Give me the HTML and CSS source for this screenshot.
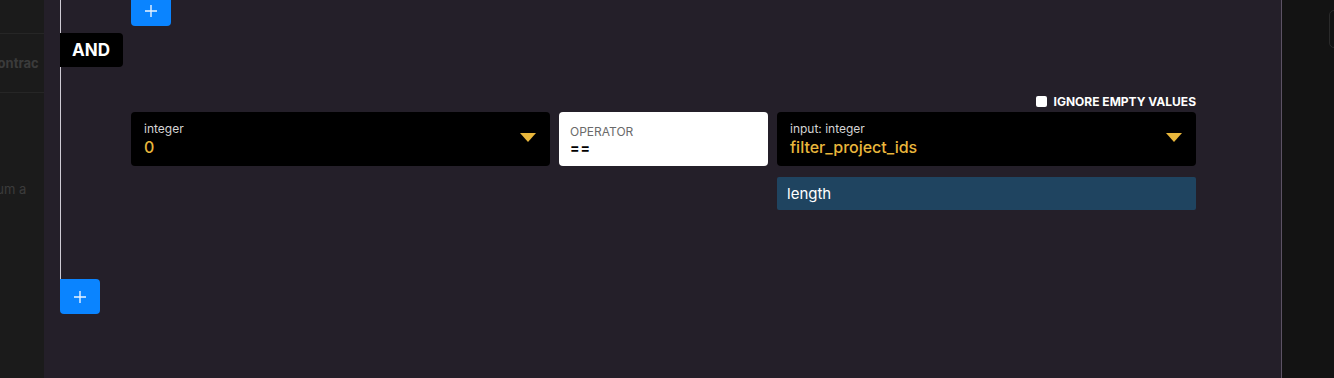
FILE: index.html
```html
<!DOCTYPE html>
<html lang="en">
<head>
    <meta charset="UTF-8">
    <meta name="viewport" content="width=device-width, initial-scale=1.0">
    <title>Filter conditions</title>
    <link rel="stylesheet" href="styles.css">
</head>
<body>
    <div class="backdrop backdrop-left">
        <div class="ghost-row ghost-head"></div>
        <div class="ghost-row ghost-title">Contrac</div>
        <div class="ghost-row ghost-text">Sum a</div>
    </div>

    <div class="panel">
        <div class="group">
            <button class="add add-top" type="button">
                <svg viewBox="0 0 14 14" width="14" height="14"><path d="M7 1v12M1 7h12" stroke="currentColor" stroke-width="1.4"/></svg>
            </button>
            <div class="and">AND</div>

            <div class="condition">
                <label class="option">
                    <span class="check"></span>
                    IGNORE EMPTY VALUES
                </label>
                <div class="fields">
                    <div class="field">
                        <div class="field-text">
                            <span class="field-label">integer</span>
                            <span class="field-value">0</span>
                        </div>
                        <span class="caret"></span>
                    </div>
                    <div class="field field-operator">
                        <div class="field-text">
                            <span class="field-label">OPERATOR</span>
                            <span class="field-value">==</span>
                        </div>
                    </div>
                    <div class="field">
                        <div class="field-text">
                            <span class="field-label">input: integer</span>
                            <span class="field-value">filter_project_ids</span>
                        </div>
                        <span class="caret"></span>
                    </div>
                </div>
                <div class="modifiers">
                    <div class="modifier">length</div>
                </div>
            </div>
        </div>
        <button class="add add-bottom" type="button">
            <svg viewBox="0 0 14 14" width="14" height="14"><path d="M7 1v12M1 7h12" stroke="currentColor" stroke-width="1.4"/></svg>
        </button>
    </div>

    <div class="backdrop backdrop-right">
        <div class="ghost-box"></div>
    </div>
</body>
</html>
```

FILE: styles.css
```css
*{
    box-sizing: border-box;
}
body{
    margin: 0;
    display: flex;
    height: 100vh;
    overflow: hidden;
    background: #121212;
    font-family: "Inter", "Liberation Sans", sans-serif;
}

/* page behind the modal */
.backdrop{
    overflow: hidden;
}
.backdrop-left{
    width: 44px;
    flex: none;
    background: #1b1b1b;
}
.ghost-row{
    margin-left: -12px;
    white-space: nowrap;
    color: #3b3b3b;
}
.ghost-head{
    height: 34px;
    border-bottom: 1px solid #262626;
}
.ghost-title{
    height: 59px;
    line-height: 58px;
    font-size: 13px;
    font-weight: 700;
    border-bottom: 1px solid #262626;
}
.ghost-text{
    margin-top: 88px;
    font-size: 13px;
}
.backdrop-right{
    flex: 1;
    background: #131313;
    padding-top: 10px;
}
.ghost-box{
    margin-left: 47px;
    width: 20px;
    height: 38px;
    border: 1px solid #2a2a2a;
    border-radius: 5px;
}

/* modal */
.panel{
    width: 1238px;
    flex: none;
    background: #241f29;
    border-right: 1px solid #5c5264;
    padding-left: 16px;
}
.group{
    border-left: 1px solid #cfcbd4;
    padding-left: 70px;
    padding-right: 85px;
    height: 279px;
}
.add{
    display: flex;
    align-items: center;
    justify-content: center;
    width: 40px;
    border: 0;
    padding: 0;
    background: #0a84ff;
    color: #eaf3ff;
    cursor: pointer;
}
.add-top{
    height: 26px;
    border-radius: 0 0 4px 4px;
}
.add-top svg{
    margin-top: -4px;
}
.add-bottom{
    height: 35px;
    border-radius: 0 4px 4px 4px;
}
.and{
    display: inline-block;
    margin: 7px 0 0 -71px;
    height: 34px;
    padding: 0 12px 0 12px;
    width: 63px;
    line-height: 34px;
    background: #000;
    color: #fff;
    font-size: 17px;
    font-weight: 700;
    border-radius: 0 4px 4px 0;
}

.condition{
    margin-top: 26px;
}
.option{
    display: flex;
    justify-content: flex-end;
    align-items: center;
    gap: 7px;
    height: 17px;
    margin-bottom: 2px;
    color: #fff;
    font-size: 12px;
    font-weight: 700;
}
.check{
    width: 11px;
    height: 11px;
    background: #fff;
    border-radius: 2px;
}
.fields{
    display: flex;
    gap: 9px;
}
.field{
    flex: 0 0 419px;
    height: 54px;
    display: flex;
    align-items: center;
    padding: 0 14px 0 13px;
    background: #000;
    border-radius: 4px;
}
.field-text{
    flex: 1;
    display: flex;
    flex-direction: column;
    padding-top: 1px;
}
.field-label{
    font-size: 12px;
    line-height: 14px;
    color: #d4d4d4;
}
.field-value{
    font-size: 16px;
    font-weight: 500;
    line-height: 22px;
    color: #e9b73c;
}
.caret{
    width: 0;
    height: 0;
    border-left: 8.5px solid transparent;
    border-right: 8.5px solid transparent;
    border-top: 9px solid #e9b73c;
    margin-top: -3px;
}
.field-operator{
    flex: 0 0 209px;
    background: #fff;
    padding-left: 11px;
}
.field-operator .field-text{
    padding-top: 4px;
}
.field-operator .field-label{
    color: #6a6a6a;
}
.field-operator .field-value{
    font-size: 14px;
    font-weight: 700;
    line-height: 18px;
    color: #000;
    letter-spacing: 1px;
}
.modifiers{
    display: flex;
    justify-content: flex-end;
    margin-top: 11px;
}
.modifier{
    width: 419px;
    height: 33px;
    line-height: 33px;
    padding-left: 10px;
    background: #1f4460;
    color: #fff;
    font-size: 15px;
    border-radius: 2px;
}
```
